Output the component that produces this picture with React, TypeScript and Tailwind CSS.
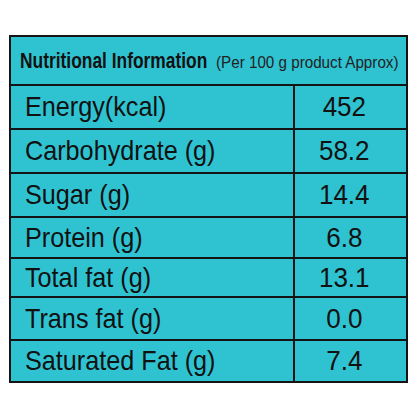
import React from 'react';

const rows = [
  { label: 'Energy(kcal)', value: '452', h: 'h-[44px]' },
  { label: 'Carbohydrate (g)', value: '58.2', h: 'h-[44px]' },
  { label: 'Sugar (g)', value: '14.4', h: 'h-[44px]' },
  { label: 'Protein (g)', value: '6.8', h: 'h-[41px]' },
  { label: 'Total fat (g)', value: '13.1', h: 'h-[39px]' },
  { label: 'Trans fat (g)', value: '0.0', h: 'h-[43px]' },
  { label: 'Saturated Fat (g)', value: '7.4', h: 'h-[40px]' },
];

const font = { fontFamily: '"Liberation Sans", Arial, sans-serif' };

export default function App() {
  return (
    <div className="w-[416px] h-[416px] bg-white pt-[35px] pl-[9px] overflow-hidden" style={font}>
      <div className="w-[399px] border-2 border-[#141414] bg-[#2fc3d2] text-[#111]">
        <div className="h-[49px] flex items-center pl-[9px] border-b-2 border-[#141414] whitespace-nowrap">
          <span className="inline-block w-[190px] text-[22px] font-bold scale-x-[0.79] origin-left">
            Nutritional Information
          </span>
          <span className="inline-block ml-[6px] mt-[4px] text-[16px] text-[#222] scale-x-[0.95] origin-left">
            (Per 100 g product Approx)
          </span>
        </div>
        {rows.map((r, i) => (
          <div
            key={r.label}
            className={`grid grid-cols-[284px_1fr] ${r.h} ${i < rows.length - 1 ? 'border-b-2 border-[#141414]' : ''}`}
          >
            <div className="flex items-center pl-[14px] border-r-2 border-[#141414] whitespace-nowrap">
              <span className="inline-block text-[28px] leading-none scale-x-[0.9] origin-left">{r.label}</span>
            </div>
            <div className="flex items-center justify-center pr-[12px]">
              <span className="inline-block text-[28px] leading-none scale-x-[0.93]">{r.value}</span>
            </div>
          </div>
        ))}
      </div>
    </div>
  );
}
